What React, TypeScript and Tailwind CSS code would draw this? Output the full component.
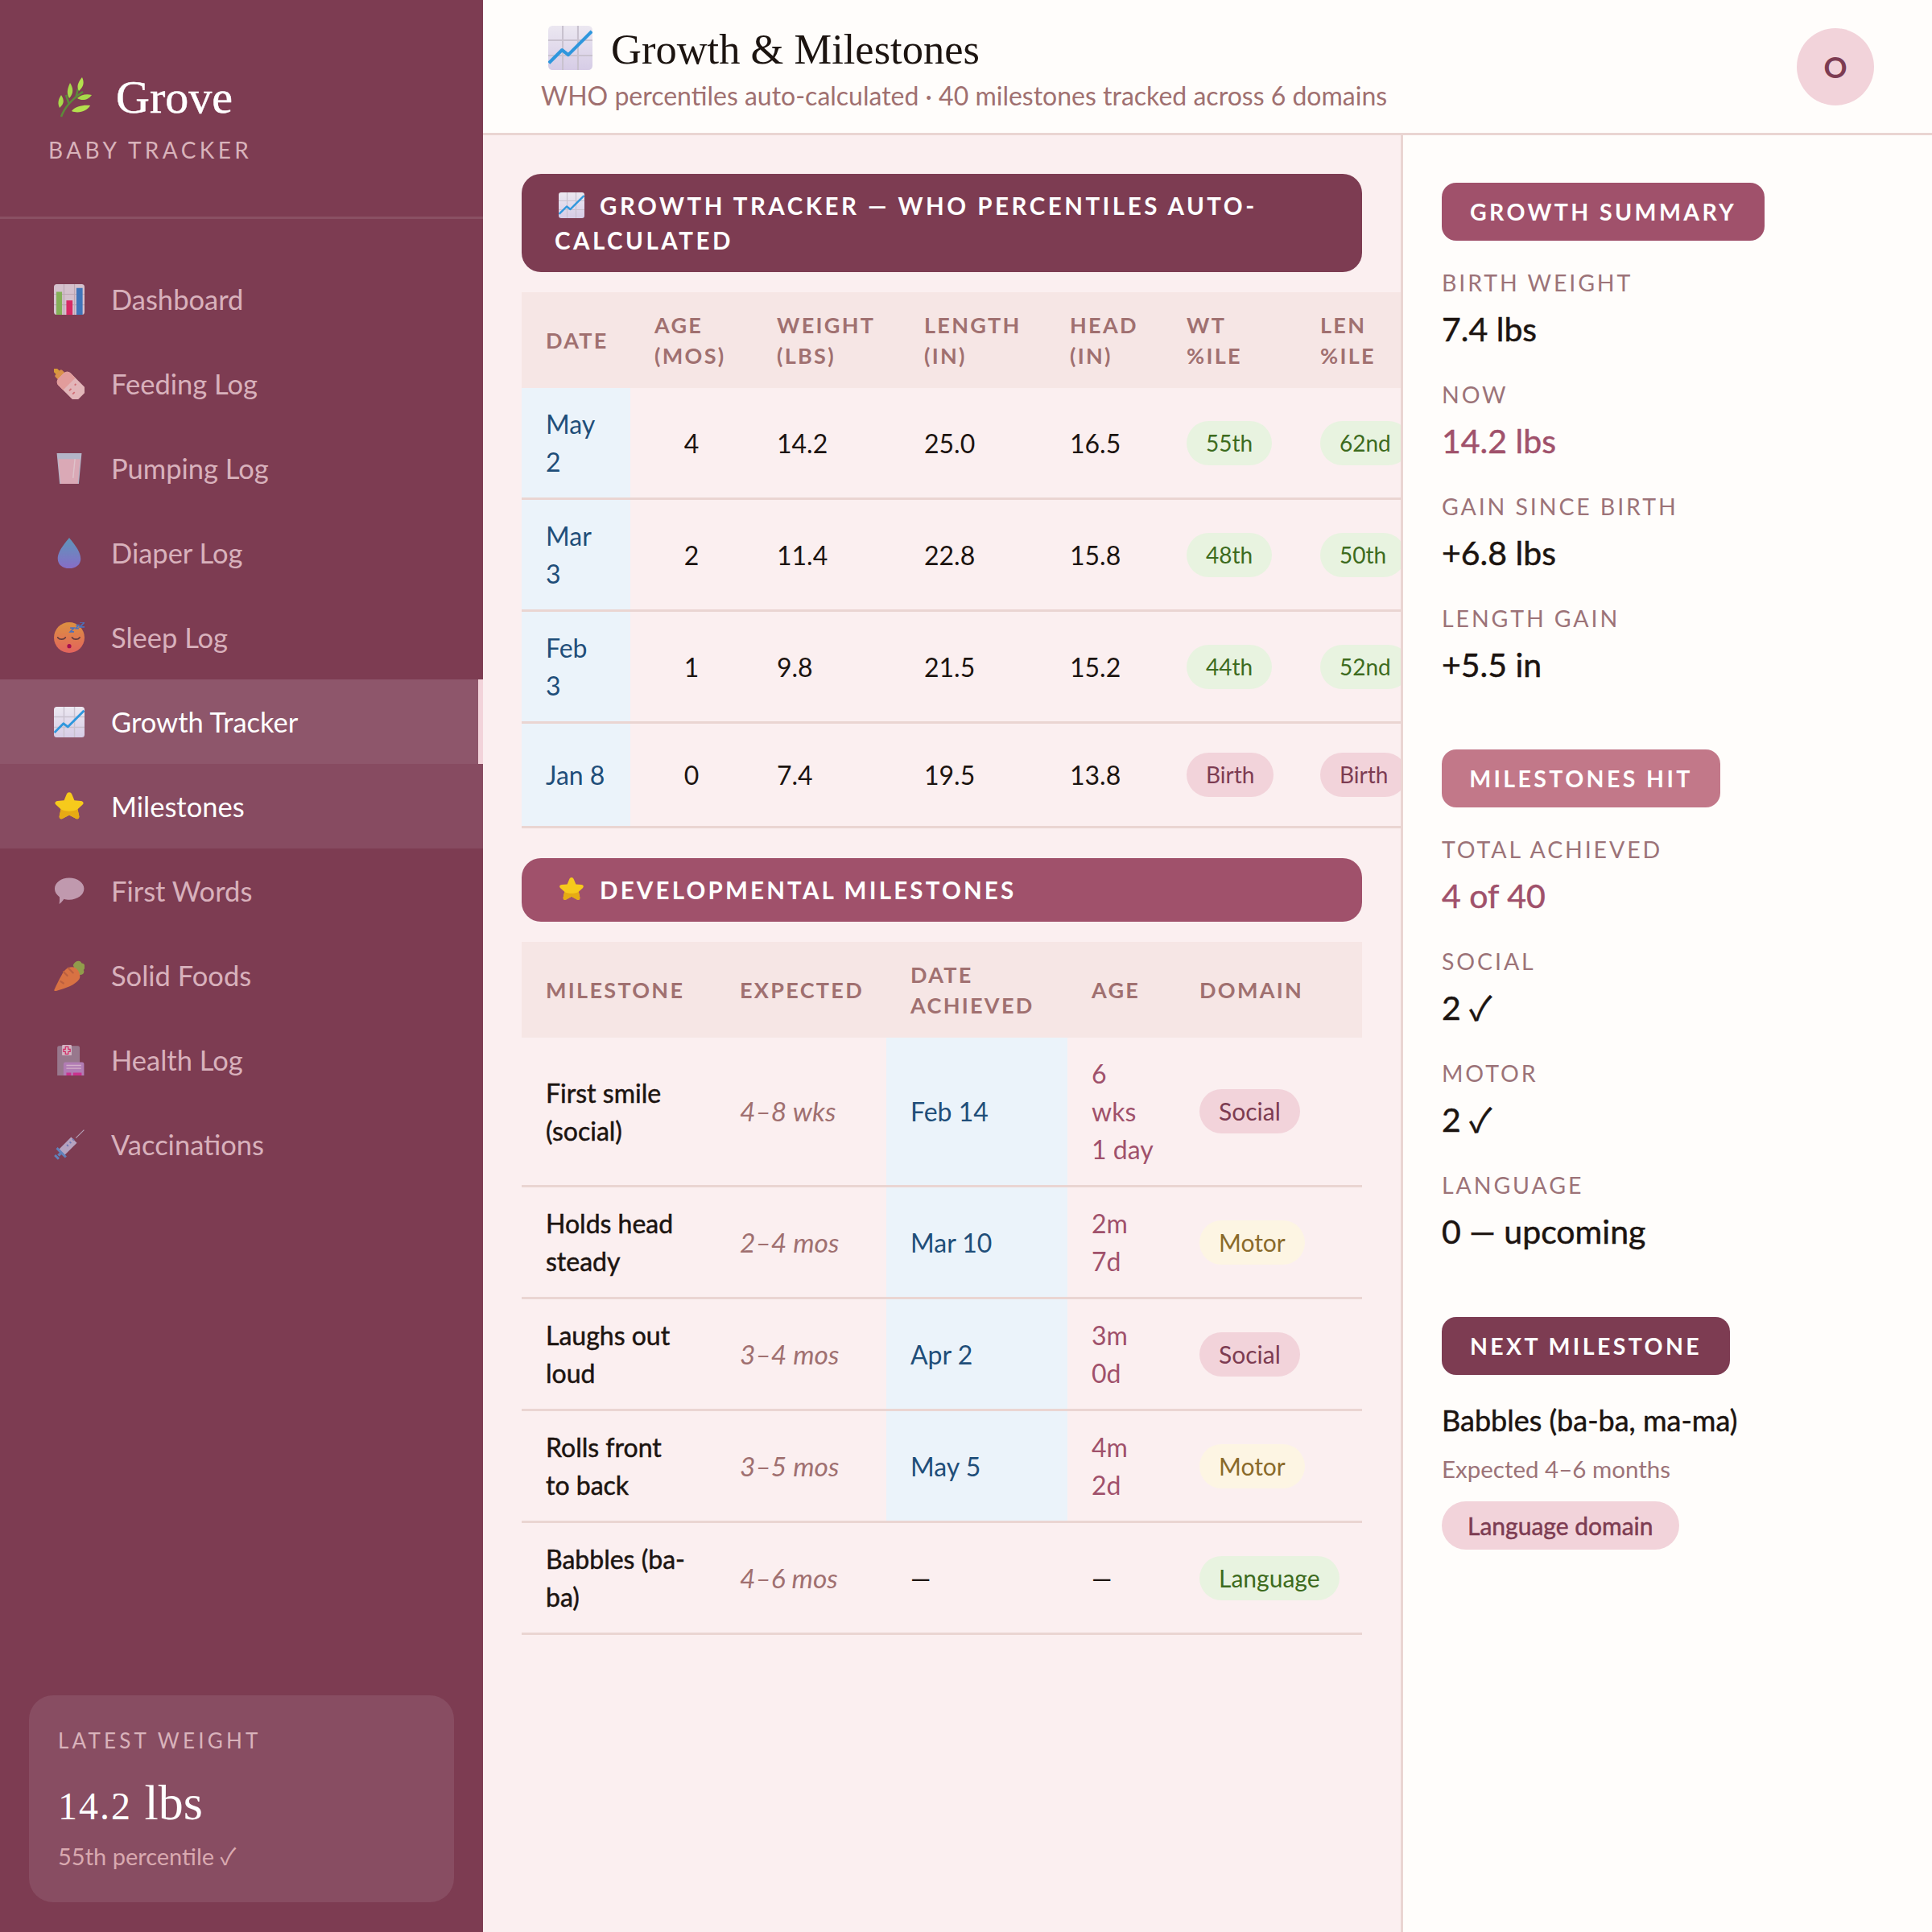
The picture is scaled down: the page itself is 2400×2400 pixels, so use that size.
import React from "react";

const med = "[-webkit-text-stroke:0.5px_currentColor]";

function ChartUp({ size = 38, className = "" }: { size?: number; className?: string }) {
  return (
    <svg width={size} height={size} viewBox="0 0 32 32" className={className}>
      <defs>
        <linearGradient id="cu" x1="0" y1="0" x2="0" y2="1">
          <stop offset="0" stopColor="#ece8f1" />
          <stop offset="1" stopColor="#d6cce6" />
        </linearGradient>
      </defs>
      <rect x="0" y="0" width="32" height="32" rx="3" fill="url(#cu)" />
      <path d="M10.500 0V32M21.500 0V32M0 10.500H32M0 21.500H32" stroke="#c9c2cf" strokeWidth="1.200" />
      <path d="M0.500 27L10 17.500L14.500 21L31.500 4" fill="none" stroke="#2f97dd" strokeWidth="2.400" strokeLinejoin="round" />
    </svg>
  );
}

function Star({ size = 38 }: { size?: number }) {
  return (
    <svg width={size} height={size} viewBox="0 0 32 32">
      <path
        d="M16 1c1.600 0 2.300 1.100 2.900 2.400l2.500 6 6.800.7c2.700.3 3.500 2.400 1.600 4.100l-5 4.500 1.500 7c.5 2.500-1.400 3.900-3.500 2.700L16 24.800l-6.800 3.600c-2.100 1.200-4-.2-3.500-2.700l1.500-7-5-4.500c-1.900-1.700-1.100-3.800 1.600-4.100l6.800-.7 2.500-6C13.700 2.100 14.400 1 16 1z"
        fill="#f6ca1c"
      />
      <path d="M5.700 25.700l1.500-7c3.500 2.800 14 2.800 17.600 0l1.500 7c.5 2.500-1.400 3.900-3.500 2.700L16 24.800l-6.800 3.600c-2.100 1.200-4-.2-3.500-2.700z" fill="#e6ab14" />
    </svg>
  );
}

const icons: Record<string, React.ReactNode> = {
  chart: (
    <svg width="38" height="38" viewBox="0 0 32 32">
      <rect width="32" height="32" rx="3" fill="#eee7f0" />
      <path d="M10.500 0V32M21.500 0V32M0 10.500H32M0 21.500H32" stroke="#cfc6cf" strokeWidth="1" />
      <rect x="2.500" y="8" width="6" height="24" fill="#86d15a" />
      <rect x="13" y="17" width="6.500" height="15" fill="#f0246a" />
      <rect x="23.500" y="4" width="6.500" height="28" fill="#2f86d8" />
    </svg>
  ),
  bottle: (
    <svg width="38" height="38" viewBox="0 0 32 32">
      <g transform="rotate(-45 16 16)">
        <path d="M13.500 -5.500c0-1.500 5-1.500 5 0V0h-5z" fill="#f2b632" />
        <rect x="11" y="-1" width="10" height="6" rx="1.500" fill="#f5a94a" />
        <rect x="7" y="4" width="18" height="30" rx="5" fill="#ffd9d6" />
        <path d="M7 9c0-3 2-5 5-5h8c3 0 5 2 5 5v7H7z" fill="#ffb8b0" />
        <path d="M11 21h3M11 26h3M19 21h2" stroke="#ea7c80" strokeWidth="1.500" />
      </g>
    </svg>
  ),
  glass: (
    <svg width="38" height="38" viewBox="0 0 32 32">
      <path d="M3 0H29L26 32H6z" fill="#c3d8ea" />
      <path d="M4.500 6H27.500L25 32H7z" fill="#f5c8d2" />
      <path d="M22 6L20 26" stroke="#fff" strokeOpacity=".6" strokeWidth="1.200" />
    </svg>
  ),
  drop: (
    <svg width="38" height="38" viewBox="0 0 32 32">
      <defs>
        <linearGradient id="dr" x1="0" y1="0" x2="0" y2="1">
          <stop offset="0" stopColor="#55b0d8" />
          <stop offset="1" stopColor="#8a7be8" />
        </linearGradient>
      </defs>
      <path d="M16 0C18 3 28 13 28 22C28 28 23 32 16 32C9 32 4 28 4 22C4 13 14 3 16 0z" fill="url(#dr)" />
    </svg>
  ),
  sleep: (
    <svg width="38" height="38" viewBox="0 0 32 32">
      <defs>
        <linearGradient id="sl" x1="0" y1="0" x2="0" y2="1">
          <stop offset="0" stopColor="#f8a93c" />
          <stop offset="1" stopColor="#ff6f61" />
        </linearGradient>
      </defs>
      <circle cx="16" cy="16" r="16" fill="url(#sl)" />
      <path d="M4 16c2 2.500 6 2.500 8 0M19 16c2 2.500 6 2.500 8 0" fill="none" stroke="#5a3a3a" strokeWidth="1.500" strokeLinecap="round" />
      <circle cx="16" cy="25" r="2.200" fill="#b3004f" />
      <path d="M17 6h4l-4 4h4M23 3h3l-3 3.500h3M27 0h5l-5 5h5" fill="none" stroke="#3f80d8" strokeWidth="1.400" />
    </svg>
  ),
  star: <Star />,
  speech: (
    <svg width="38" height="38" viewBox="0 0 32 32">
      <path d="M16 2C24.500 2 31.500 7 31.500 13.500C31.500 20 24.500 25 16 25C14 25 12 24.700 10.500 24.200C9 26.500 7 28.500 5.500 29.500C6 27 6 24 5.800 22C2.800 19.800.8 17 .8 13.500C.8 7 7.500 2 16 2z" fill="#d3b4c8" />
    </svg>
  ),
  carrot: (
    <svg width="38" height="38" viewBox="0 0 32 32">
      <path d="M20 5c2-5 8-6 9-2 3 0 5 4 2 7 2 4-3 7-7 4z" fill="#97b84a" />
      <path d="M.5 30.500C-.5 31.500 1 32.500 3 31.800C12 29 22 26 26.500 19.500C29 15.500 25 7 19 7C13 7 10 12 8 15.500C5 20.500 2.500 26 .5 30.500z" fill="#f28240" />
      <path d="M10 12l4 4M15 8l5 5M7 22l3 2" stroke="#cc6a3a" strokeWidth="1.800" strokeLinecap="round" />
    </svg>
  ),
  hospital: (
    <svg width="38" height="38" viewBox="0 0 32 32">
      <path d="M3.500 3a2 2 0 0 1 2-2H25a2 2 0 0 1 2 2V32H3.500z" fill="#a08a9e" />
      <rect x="8.500" y="0" width="10" height="11" rx="1" fill="#ead6e2" />
      <path d="M12 2h3v2.500h2v2.500h-2V9.500h-3V7h-2V4.500h2z" fill="none" stroke="#e8246a" strokeWidth="1" />
      <path d="M10 20a2 2 0 0 1 2-2H29.500a2 2 0 0 1 2 2V32H10z" fill="#c08fd0" />
      <path d="M13 21.500h15.500M13 24.500h15.500" stroke="#ecd0ec" strokeWidth="1.200" />
      <path d="M13 29h5v3h-5zM20 29h9v3h-9z" fill="#e030a0" />
    </svg>
  ),
  syringe: (
    <svg width="38" height="38" viewBox="0 0 32 32">
      <path d="M31.500.5L23 9" stroke="#c7bfd5" strokeWidth=".9" />
      <path d="M18 8l6 6-14 14-6-6z" fill="#c5c0e0" />
      <path d="M19.500 10l1.500 1.500M16.500 13l1.500 1.500M13.500 16l1.500 1.500" stroke="#6a8ad0" strokeWidth="1.500" />
      <path d="M3 19.500l9.500 9.500M1 27l4 4" stroke="#5a95d8" strokeWidth="2.500" />
      <path d="M5 25l2 2" stroke="#5a95d8" strokeWidth="4" />
    </svg>
  ),
  growth: <ChartUp />,
};

const nav = [
  { icon: "chart", label: "Dashboard" },
  { icon: "bottle", label: "Feeding Log" },
  { icon: "glass", label: "Pumping Log" },
  { icon: "drop", label: "Diaper Log" },
  { icon: "sleep", label: "Sleep Log" },
  { icon: "growth", label: "Growth Tracker", active: true },
  { icon: "star", label: "Milestones", hover: true },
  { icon: "speech", label: "First Words" },
  { icon: "carrot", label: "Solid Foods" },
  { icon: "hospital", label: "Health Log" },
  { icon: "syringe", label: "Vaccinations" },
];

function Check() {
  return <span className="font-['Noto_Sans_CJK_JP',sans-serif] leading-none">✓</span>;
}

function Sidebar() {
  return (
    <aside className="w-[600px] h-full shrink-0 bg-[#7d3c52] flex flex-col">
      <div className="h-[272px] border-b-[3px] border-white/10 pl-[60px] pt-[88px]">
        <div className="flex items-center h-[66px]">
          <svg width="44" height="50" viewBox="0 0 44 50" className="ml-[10px]">
            <path d="M6 49C10 38 18 28 33 18M16 34L12 22M24 26L27 14" stroke="#5d8a3a" strokeWidth="2.500" fill="none" />
            <path d="M4 38C0 30 5 24 6 22C10 28 10 33 4 38z" fill="#a8d84a" />
            <path d="M16 26C11 18 16 10 17 7C21 13 22 20 16 26z" fill="#a8d84a" />
            <path d="M28 17C24 10 29 4 32 0C35 6 34 12 28 17z" fill="#b4e04e" />
            <path d="M19 42C23 36 34 34 42 35C39 41 28 46 19 42z" fill="#b4e04e" />
            <path d="M26 26C30 22 37 20 44 22C40 28 32 30 26 26z" fill="#a8d84a" />
          </svg>
          <span className={"ml-[30px] font-['Liberation_Serif',serif] text-[58px] text-white leading-none " + med}>Grove</span>
        </div>
        <div className="mt-[16px] h-[32px] leading-[32px] text-[28px] tracking-[4.4px] text-[#d9b3bb] font-['Lato',sans-serif]">BABY TRACKER</div>
      </div>
      <nav className="pt-[47px] flex-1">
        {nav.map((n) => (
          <div
            key={n.label}
            className={
              "h-[105px] pl-[67px] flex items-center gap-[33px] text-[34.5px] font-['Lato',sans-serif] " +
              (n.active
                ? "bg-[#8e566b] border-r-[6px] border-[#f2d3da] text-white"
                : n.hover
                ? "bg-[#874b61] text-white"
                : "text-[#f2d3da] opacity-[.78]")
            }
          >
            <span className="w-[38px] h-[38px] block">{icons[n.icon]}</span>
            <span>{n.label}</span>
          </div>
        ))}
      </nav>
      <div className="mx-[36px] mb-[37px] h-[257px] rounded-[30px] bg-[#884d62] pl-[36px] pt-[40px] font-['Lato',sans-serif]">
        <div className="text-[26px] leading-[32px] tracking-[4.2px] text-[#d9b3bb]">LATEST WEIGHT</div>
        <div className="mt-[26px] text-[62px] leading-[70px] text-white font-['Liberation_Serif',serif]">
          <span className="text-[48px] tracking-[2px]">14.2</span> lbs
        </div>
        <div className="mt-[7px] h-[40px] text-[29px] leading-[40px] text-[#d9a9b0]">55th percentile <Check /></div>
      </div>
    </aside>
  );
}

function Pill({ children, tone, small }: { children: React.ReactNode; tone: "green" | "pink" | "yellow"; small?: boolean }) {
  const cls =
    tone === "green"
      ? "bg-[#e8f3e0] text-[#3d6b1e]"
      : tone === "pink"
      ? "bg-[#f2d3da] text-[#7d3c52]"
      : "bg-[#fdf5e3] text-[#8a6a2a]";
  return <span className={"inline-block h-[55px] leading-[55px] px-[24px] rounded-full whitespace-nowrap align-middle " + (small ? "text-[28px] " : "text-[30px] ") + cls}>{children}</span>;
}

const growthRows = [
  { d: ["May", "2"], a: "4", w: "14.2", l: "25.0", h: "16.5", wt: "55th", le: "62nd" },
  { d: ["Mar", "3"], a: "2", w: "11.4", l: "22.8", h: "15.8", wt: "48th", le: "50th" },
  { d: ["Feb", "3"], a: "1", w: "9.8", l: "21.5", h: "15.2", wt: "44th", le: "52nd" },
  { d: ["Jan 8"], a: "0", w: "7.4", l: "19.5", h: "13.8", wt: "Birth", le: "Birth", birth: true },
];

const th = "text-left align-middle px-[30px] py-[21.5px] text-[27px] leading-[38px] font-bold tracking-[2.3px] text-[#a07070] bg-[#f6e6e5]";
const td = "px-[30px] py-[21px] text-[32px] leading-[47px] align-middle whitespace-nowrap";

function GrowthTable() {
  return (
    <table className="border-collapse table-fixed w-[1150px] mt-[25px]">
      <colgroup>
        <col className="w-[135px]" />
        <col className="w-[152px]" />
        <col className="w-[183px]" />
        <col className="w-[181px]" />
        <col className="w-[145px]" />
        <col className="w-[166px]" />
        <col className="w-[188px]" />
      </colgroup>
      <thead>
        <tr>
          <th className={th}>DATE</th>
          <th className={th}>AGE<br />(MOS)</th>
          <th className={th}>WEIGHT<br />(LBS)</th>
          <th className={th}>LENGTH<br />(IN)</th>
          <th className={th}>HEAD<br />(IN)</th>
          <th className={th}>WT<br />%ILE</th>
          <th className={th}>LEN<br />%ILE</th>
        </tr>
      </thead>
      <tbody>
        {growthRows.map((r) => (
          <tr key={r.a} className={"border-b-[3px] border-[#ead5d2] text-[#1c1410] " + (r.birth ? "h-[130px]" : "")}>
            <td className={td + " bg-[#ebf3fa] text-[#1f4e79]"}>
              {r.d[0]}
              {r.d[1] && <><br />{r.d[1]}</>}
            </td>
            <td className={td + " text-center"}>{r.a}</td>
            <td className={td}>{r.w}</td>
            <td className={td}>{r.l}</td>
            <td className={td}>{r.h}</td>
            <td className={td}><Pill small tone={r.birth ? "pink" : "green"}>{r.wt}</Pill></td>
            <td className={td}><Pill small tone={r.birth ? "pink" : "green"}>{r.le}</Pill></td>
          </tr>
        ))}
      </tbody>
    </table>
  );
}

const mileRows: { m: string[]; e: string; d: string; a: string[]; dom: string; tone: "green" | "pink" | "yellow"; empty?: boolean }[] = [
  { m: ["First smile", "(social)"], e: "4–8 wks", d: "Feb 14", a: ["6", "wks", "1 day"], dom: "Social", tone: "pink" },
  { m: ["Holds head", "steady"], e: "2–4 mos", d: "Mar 10", a: ["2m", "7d"], dom: "Motor", tone: "yellow" },
  { m: ["Laughs out", "loud"], e: "3–4 mos", d: "Apr 2", a: ["3m", "0d"], dom: "Social", tone: "pink" },
  { m: ["Rolls front", "to back"], e: "3–5 mos", d: "May 5", a: ["4m", "2d"], dom: "Motor", tone: "yellow" },
  { m: ["Babbles (ba-", "ba)"], e: "4–6 mos", d: "—", a: ["—"], dom: "Language", tone: "green", empty: true },
];

function MilestoneTable() {
  return (
    <table className="border-collapse table-fixed w-[1044px] mt-[25px]">
      <colgroup>
        <col className="w-[241px]" />
        <col className="w-[212px]" />
        <col className="w-[225px]" />
        <col className="w-[134px]" />
        <col className="w-[232px]" />
      </colgroup>
      <thead>
        <tr>
          <th className={th}>MILESTONE</th>
          <th className={th}>EXPECTED</th>
          <th className={th}>DATE<br />ACHIEVED</th>
          <th className={th}>AGE</th>
          <th className={th}>DOMAIN</th>
        </tr>
      </thead>
      <tbody>
        {mileRows.map((r) => (
          <tr key={r.m[0]} className="border-b-[3px] border-[#ead5d2]">
            <td className={td + " text-[#1c1410] " + med}>{r.m[0]}<br />{r.m[1]}</td>
            <td className={td + " italic text-[#a07070] !text-[33.5px]"}>{r.e}</td>
            <td className={td + (r.empty ? " text-[#1c1410]" : " bg-[#ebf3fa] text-[#1f4e79]")}>{r.d}</td>
            <td className={td + (r.empty ? " text-[#1c1410]" : " text-[#a0516b]")}>
              {r.a.map((x, i) => (
                <React.Fragment key={x}>
                  {i > 0 && <br />}
                  {x}
                </React.Fragment>
              ))}
            </td>
            <td className={td}><Pill tone={r.tone}>{r.dom}</Pill></td>
          </tr>
        ))}
      </tbody>
    </table>
  );
}

function Stat({ label, value, accent, check }: { label: string; value: string; accent?: boolean; check?: boolean }) {
  return (
    <div className="mb-[33px]">
      <div className="h-[40px] leading-[40px] mb-[10px] text-[28.5px] tracking-[2.9px] text-[#9c7378]">{label}</div>
      <div className={"h-[56px] leading-[56px] text-[41px] " + med + " " + (accent ? "text-[#a0516b]" : "text-[#1c1410]")}>
        {value}
        {check && <> <Check /></>}
      </div>
    </div>
  );
}

function PanelHead({ children, bg, w }: { children: React.ReactNode; bg: string; w: string }) {
  return <div className={"h-[72px] leading-[72px] rounded-[18px] text-center text-[28.5px] font-bold tracking-[3.4px] text-white mb-[32px] " + bg + " " + w}>{children}</div>;
}

function RightPanel() {
  return (
    <aside className="flex-1 pl-[48px] pt-[59px] bg-[#fffdfb] border-l-[3px] border-[#ead5d2]">
      <PanelHead bg="bg-[#a0516b]" w="w-[401px]">GROWTH SUMMARY</PanelHead>
      <Stat label="BIRTH WEIGHT" value="7.4 lbs" />
      <Stat label="NOW" value="14.2 lbs" accent />
      <Stat label="GAIN SINCE BIRTH" value="+6.8 lbs" />
      <Stat label="LENGTH GAIN" value="+5.5 in" />
      <div className="h-[44px]" />
      <PanelHead bg="bg-[#c27889]" w="w-[346px]">MILESTONES HIT</PanelHead>
      <Stat label="TOTAL ACHIEVED" value="4 of 40" accent />
      <Stat label="SOCIAL" value="2" check />
      <Stat label="MOTOR" value="2" check />
      <Stat label="LANGUAGE" value="0 — upcoming" />
      <div className="h-[45px]" />
      <PanelHead bg="bg-[#7d3c52]" w="w-[358px]">NEXT MILESTONE</PanelHead>
      <div className={"h-[48px] leading-[48px] text-[36px] text-[#1c1410] mb-[17px] " + med}>Babbles (ba-ba, ma-ma)</div>
      <div className="h-[40px] leading-[40px] text-[29.5px] text-[#9c7378] mb-[20px]">Expected 4–6 months</div>
      <span className={"inline-block h-[60px] leading-[60px] px-[32px] rounded-full bg-[#f2d3da] text-[#7d3c52] text-[30px] " + med}>Language domain</span>
    </aside>
  );
}

export default function App() {
  return (
    <div className="w-[2400px] h-[2400px] flex overflow-hidden font-['Lato',sans-serif] bg-[#fffdfb]">
      <Sidebar />
      <div className="flex-1 flex flex-col min-w-0">
        <header className="h-[168px] shrink-0 border-b-[3px] border-[#ead5d2] bg-[#fffdfb] flex items-center justify-between pl-[72px] pr-[72px]">
          <div>
            <div className="flex items-center pl-[9px] h-[66px]">
              <ChartUp size={55} />
              <span className="ml-[23px] mt-[4px] text-[52.5px] leading-none font-['Liberation_Serif',serif] text-[#1c1410]">Growth &amp; Milestones</span>
            </div>
            <div className="mt-[7px] text-[32px] leading-[40px] text-[#a07070]">WHO percentiles auto-calculated · 40 milestones tracked across 6 domains</div>
          </div>
          <div className="w-[96px] h-[96px] rounded-full bg-[#f2d3da] flex items-center justify-center text-[36px] font-bold text-[#7d3c52]">O</div>
        </header>
        <div className="flex-1 flex min-h-0">
          <main className="w-[1140px] shrink-0 pl-[48px] pt-[48px] bg-[#fbeff0] overflow-hidden">
            <div className="w-[1044px] rounded-[24px] bg-[#7d3c52] pl-[41px] pr-[30px] py-[18px] text-[29.5px] leading-[43px] font-bold tracking-[3.5px] text-white">
              <ChartUp size={32} className="inline-block align-[-4px] ml-[5px] mr-[19px]" />
              GROWTH TRACKER — WHO PERCENTILES AUTO-<br />CALCULATED
            </div>
            <GrowthTable />
            <div className="w-[1044px] mt-[37px] rounded-[24px] bg-[#a0516b] pl-[41px] py-[18px] text-[29.5px] leading-[43px] font-bold tracking-[3.2px] text-white">
              <span className="inline-block align-[-4px] ml-[5px] mr-[19px]"><Star size={32} /></span>
              DEVELOPMENTAL MILESTONES
            </div>
            <MilestoneTable />
          </main>
          <RightPanel />
        </div>
      </div>
    </div>
  );
}
